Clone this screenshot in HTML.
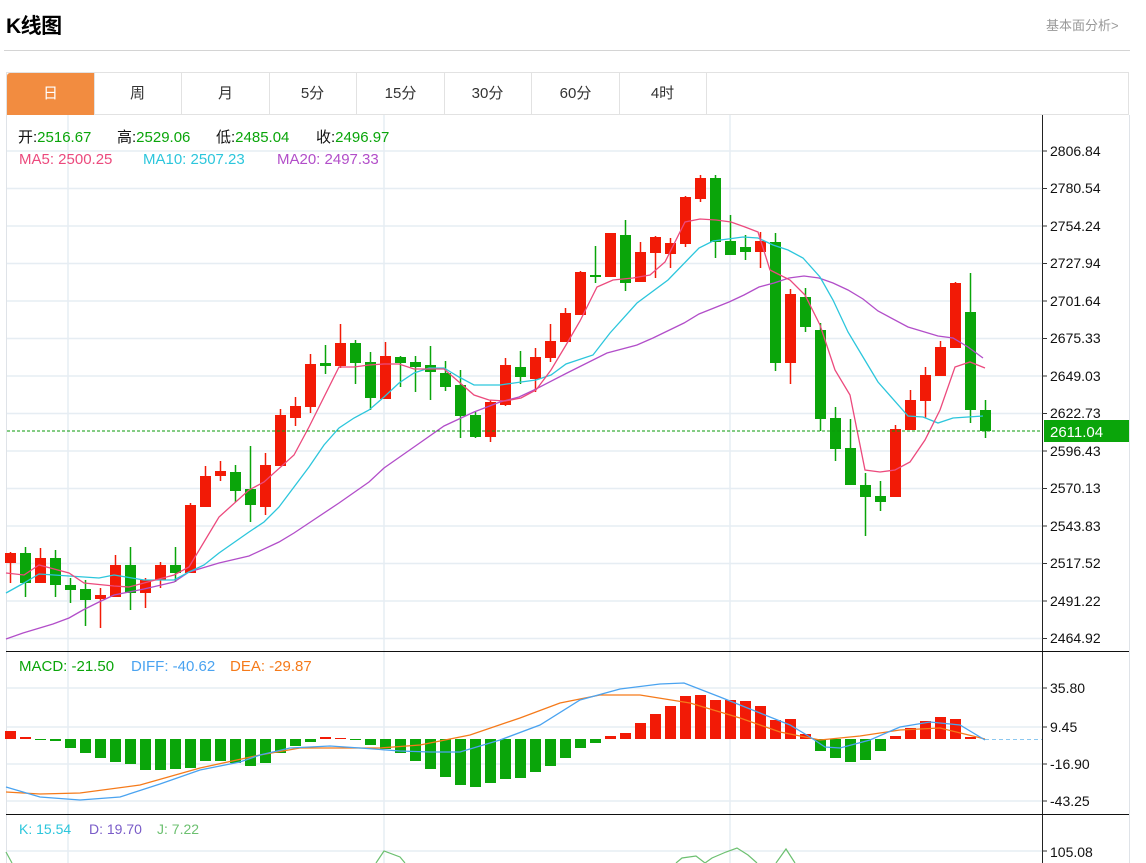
<!DOCTYPE html>
<html><head><meta charset="utf-8">
<style>
html,body{margin:0;padding:0;background:#fff;}
body{width:1146px;height:863px;overflow:hidden;position:relative;font-family:"Liberation Sans","Noto Sans CJK SC",sans-serif;}
.title{position:absolute;left:6px;top:10px;font-size:21px;font-weight:bold;color:#000;letter-spacing:-0.5px;}
.more{position:absolute;left:1046px;top:15px;font-size:13px;color:#999;}
.hr{position:absolute;left:4px;top:50px;width:1126px;height:1px;background:#d4d4d4;}
.tabs{position:absolute;left:6px;top:72px;width:1123px;height:43px;border:1px solid #e2e2e2;border-bottom:1px solid #e2e2e2;box-sizing:border-box;}
.tab{position:absolute;top:0;height:42px;width:87px;border-right:1px solid #e2e2e2;text-align:center;line-height:42px;font-size:15px;color:#333;}
.tab.on{background:#f28c40;color:#fff;border-radius:3px 0 0 0;}
svg{position:absolute;left:0;top:0;}
</style></head><body>
<div class="title">K线图</div>
<div class="more">基本面分析&gt;</div>
<div class="hr"></div>
<div class="tabs">
<div class="tab on" style="left:0">日</div>
<div class="tab" style="left:87px">周</div>
<div class="tab" style="left:175px">月</div>
<div class="tab" style="left:262px">5分</div>
<div class="tab" style="left:350px">15分</div>
<div class="tab" style="left:437px">30分</div>
<div class="tab" style="left:525px">60分</div>
<div class="tab" style="left:612px">4时</div>
</div>
<svg id="c" width="1146" height="863" xmlns="http://www.w3.org/2000/svg" font-family="Liberation Sans, Noto Sans CJK SC, sans-serif">
<line x1="6.5" y1="115" x2="6.5" y2="863" stroke="#dfe3e8"/>
<line x1="1129.5" y1="115" x2="1129.5" y2="863" stroke="#dfe3e8"/>
<g stroke="#e6edf3" stroke-width="1.5">
<line x1="7" y1="151" x2="1042" y2="151"/><line x1="7" y1="188.5" x2="1042" y2="188.5"/>
<line x1="7" y1="226" x2="1042" y2="226"/><line x1="7" y1="263.5" x2="1042" y2="263.5"/>
<line x1="7" y1="301" x2="1042" y2="301"/><line x1="7" y1="338.5" x2="1042" y2="338.5"/>
<line x1="7" y1="376" x2="1042" y2="376"/><line x1="7" y1="413.5" x2="1042" y2="413.5"/>
<line x1="7" y1="451" x2="1042" y2="451"/><line x1="7" y1="488.5" x2="1042" y2="488.5"/>
<line x1="7" y1="526" x2="1042" y2="526"/><line x1="7" y1="563.5" x2="1042" y2="563.5"/>
<line x1="7" y1="601" x2="1042" y2="601"/><line x1="7" y1="638.5" x2="1042" y2="638.5"/>
<line x1="7" y1="688" x2="1042" y2="688"/><line x1="7" y1="727" x2="1042" y2="727"/>
<line x1="7" y1="764" x2="1042" y2="764"/><line x1="7" y1="801" x2="1042" y2="801"/>
<line x1="7" y1="851" x2="1042" y2="851"/>
<line x1="68" y1="115" x2="68" y2="863"/><line x1="384" y1="115" x2="384" y2="863"/><line x1="730" y1="115" x2="730" y2="863"/>
</g>
<line x1="1042.5" y1="115" x2="1042.5" y2="863" stroke="#222"/>
<line x1="6" y1="651.5" x2="1129" y2="651.5" stroke="#111"/>
<line x1="6" y1="814.5" x2="1129" y2="814.5" stroke="#111"/>
<g stroke="#333">
<line x1="1042" y1="151" x2="1047" y2="151"/><line x1="1042" y1="188.5" x2="1047" y2="188.5"/>
<line x1="1042" y1="226" x2="1047" y2="226"/><line x1="1042" y1="263.5" x2="1047" y2="263.5"/>
<line x1="1042" y1="301" x2="1047" y2="301"/><line x1="1042" y1="338.5" x2="1047" y2="338.5"/>
<line x1="1042" y1="376" x2="1047" y2="376"/><line x1="1042" y1="413.5" x2="1047" y2="413.5"/>
<line x1="1042" y1="451" x2="1047" y2="451"/><line x1="1042" y1="488.5" x2="1047" y2="488.5"/>
<line x1="1042" y1="526" x2="1047" y2="526"/><line x1="1042" y1="563.5" x2="1047" y2="563.5"/>
<line x1="1042" y1="601" x2="1047" y2="601"/><line x1="1042" y1="638.5" x2="1047" y2="638.5"/>
<line x1="1042" y1="688" x2="1047" y2="688"/><line x1="1042" y1="727" x2="1047" y2="727"/>
<line x1="1042" y1="764" x2="1047" y2="764"/><line x1="1042" y1="801" x2="1047" y2="801"/>
<line x1="1042" y1="851" x2="1047" y2="851"/>
</g>
<g font-size="14" fill="#111">
<text x="1050" y="156">2806.84</text><text x="1050" y="193">2780.54</text>
<text x="1050" y="231">2754.24</text><text x="1050" y="268">2727.94</text>
<text x="1050" y="306">2701.64</text><text x="1050" y="343">2675.33</text>
<text x="1050" y="381">2649.03</text><text x="1050" y="418">2622.73</text>
<text x="1050" y="456">2596.43</text><text x="1050" y="493">2570.13</text>
<text x="1050" y="531">2543.83</text><text x="1050" y="568">2517.52</text>
<text x="1050" y="606">2491.22</text><text x="1050" y="643">2464.92</text>
<text x="1050" y="693">35.80</text><text x="1050" y="732">9.45</text>
<text x="1050" y="769">-16.90</text><text x="1050" y="806">-43.25</text>
<text x="1050" y="857">105.08</text>
</g>
<rect x="1044" y="420" width="85" height="22" fill="#0aa50a"/>
<text x="1050" y="437" font-size="15" fill="#fff">2611.04</text>
<g id="cd"></g>
<polyline fill="none" stroke="#b24ec9" stroke-width="1.3" points="6,639 23,633 53,624 69,618 83,610 99,602 114,595 129,592 144,589 174,582 189,572 219,563 249,556 279,542 294,533 309,523 339,503 369,482 384,468 414,447 444,426 474,412 500,402 519,397 534,390 567,373 607,353 637,345 653,338 684,323 699,314 729,302 744,295 759,287 774,283 789,278 804,276 819,278 833,283 848,290 863,299 878,311 908,327 938,336 953,338 968,347 983,358"/>
<polyline fill="none" stroke="#2cc6dc" stroke-width="1.3" points="6,593 24,583 39,574 69,576 99,578 114,575 144,580 174,580 189,572 204,565 219,553 249,532 264,522 279,507 294,487 309,467 324,445 339,428 354,418 369,410 384,397 399,383 414,373 429,368 444,368 459,377 474,385 500,385 521,382 536,380 551,375 566,364 593,355 610,333 637,303 668,280 699,248 713,241 743,237 758,238 773,245 788,250 803,258 820,277 833,300 848,332 863,357 878,382 908,416 923,417 938,423 953,418 983,416"/>
<polyline fill="none" stroke="#ec4a7d" stroke-width="1.3" points="6,573 24,575 39,565 69,573 84,583 114,586 129,587 144,583 174,575 189,567 219,517 249,490 264,482 294,455 309,427 339,367 354,367 369,365 384,364 399,364 414,369 444,369 459,382 474,395 489,400 505,401 521,398 536,390 551,370 566,345 580,321 597,287 613,280 633,278 650,275 665,262 685,222 700,219 716,220 731,222 745,227 758,232 770,270 790,280 805,295 820,325 835,370 850,395 865,470 880,472 895,470 910,462 925,440 940,410 955,367 970,362 985,368"/>
<line x1="7" y1="431" x2="1042" y2="431" stroke="#0a9a0a" stroke-dasharray="3,2"/>
<g id="md"></g>
<line x1="985" y1="739.5" x2="1042" y2="739.5" stroke="#8cc8f0" stroke-dasharray="4,3"/>
<polyline fill="none" stroke="#f57a1a" stroke-width="1.3" points="6,792 40,794 80,793 140,785 200,768 260,755 300,748 380,748 420,745 470,735 520,718 560,703 600,695 640,695 690,703 740,718 780,732 820,740 860,736 900,730 940,728 985,739"/>
<polyline fill="none" stroke="#4aa3f0" stroke-width="1.3" points="6,787 40,797 80,800 120,797 160,784 200,770 240,762 260,755 290,748 330,746 360,748 400,751 430,752 460,752 500,740 540,725 580,700 620,689 660,684 684,683 720,697 760,713 790,725 810,737 825,747 840,748 870,740 900,727 930,722 960,725 985,740"/>
<polyline fill="none" stroke="#6cc070" stroke-width="1.2" points="6,852 12,863"/>
<polyline fill="none" stroke="#6cc070" stroke-width="1.2" points="376,863 384,851 400,857 405,863"/>
<polyline fill="none" stroke="#6cc070" stroke-width="1.2" points="676,863 682,858 696,856 705,863 712,858 726,852 737,848 748,855 757,863"/>
<polyline fill="none" stroke="#6cc070" stroke-width="1.2" points="776,863 786,849 795,863"/>
<g font-size="15" fill="#111">
<text x="18" y="142">开:<tspan fill="#0aa50a">2516.67</tspan></text>
<text x="117" y="142">高:<tspan fill="#0aa50a">2529.06</tspan></text>
<text x="216" y="142">低:<tspan fill="#0aa50a">2485.04</tspan></text>
<text x="316" y="142">收:<tspan fill="#0aa50a">2496.97</tspan></text>
</g>
<text x="19" y="164" font-size="15" fill="#ec4a7d">MA5: 2500.25</text>
<text x="143" y="164" font-size="15" fill="#2cc6dc">MA10: 2507.23</text>
<text x="277" y="164" font-size="15" fill="#b24ec9">MA20: 2497.33</text>
<text x="19" y="671" font-size="15" fill="#0aa50a">MACD: -21.50</text>
<text x="131" y="671" font-size="15" fill="#4aa3f0">DIFF: -40.62</text>
<text x="230" y="671" font-size="15" fill="#f57a1a">DEA: -29.87</text>
<text x="19" y="834" font-size="14" fill="#2cc6dc">K: 15.54</text>
<text x="89" y="834" font-size="14" fill="#7a5cc8">D: 19.70</text>
<text x="157" y="834" font-size="14" fill="#6cc070">J: 7.22</text>
</svg>
<script>
var D=[["r",553,563,552,583],["g",553,583,547,597],["r",558,583,548,583],["g",558,585,550,597],["g",585,590,578,603],["g",589,600,580,626],["r",595,599,588,628],["r",565,597,555,597],["g",565,593,547,610],["r",580,593,578,608],["r",565,580,562,588],["g",565,573,547,582],["r",505,573,503,573],["r",476,507,466,507],["r",471,476,461,481],["g",472,491,465,502],["g",489,505,446,522],["r",465,507,453,515],["r",415,466,409,466],["r",406,418,397,426],["r",364,407,354,413],["g",363,366,345,374],["r",343,366,324,368],["g",343,363,340,384],["g",362,398,352,410],["r",356,399,342,399],["g",357,363,356,387],["g",362,367,356,392],["g",365,372,346,400],["g",373,387,361,391],["g",385,416,370,438],["g",415,437,412,438],["r",402,437,400,442],["r",365,405,358,406],["g",367,377,351,384],["r",357,379,348,392],["r",341,358,324,362],["r",313,342,308,342],["r",272,315,271,315],["g",275,277,246,283],["r",233,277,233,277],["g",235,283,220,291],["r",252,282,242,282],["r",237,253,236,278],["r",243,254,238,268],["r",197,244,196,247],["r",178,199,175,202],["g",178,242,175,258],["g",241,255,215,255],["g",247,252,235,260],["r",241,252,232,268],["g",242,363,233,371],["r",294,363,289,384],["g",297,327,288,332],["g",330,419,323,431],["g",418,449,407,461],["g",448,485,419,485],["g",485,497,473,536],["g",496,502,481,511],["r",429,497,425,497],["r",400,430,390,430],["r",375,401,367,418],["r",347,376,341,376],["r",283,348,282,348],["g",312,410,273,423],["g",410,431,400,438]];
var M=[731,737,740,741,748,753,758,762,764,770,770,769,768,761,761,763,766,763,753,746,742,737,738,740,745,749,753,761,769,777,785,787,783,779,778,772,766,758,748,743,736,733,723,714,706,696,695,700,700,701,706,720,719,734,751,758,762,760,751,736,728,721,717,719,737,739];
var ns="http://www.w3.org/2000/svg",cd=document.getElementById("cd"),md=document.getElementById("md");
function el(p,t,a){var e=document.createElementNS(ns,t);for(var k in a)e.setAttribute(k,a[k]);p.appendChild(e);}
D.forEach(function(d,i){var x=10+15*i,c=d[0]=="r"?"#f21a06":"#0aa50a";
el(cd,"line",{x1:x+0.5,x2:x+0.5,y1:d[3],y2:d[4],stroke:c,"stroke-width":1.5});
var h=Math.max(d[2]-d[1],2);el(cd,"rect",{x:x-5,y:d[1],width:11,height:h,fill:c});
var m=M[i],z=739;if(Math.abs(m-z)>=1){var c2=m<z?"#f21a06":"#0aa50a";el(md,"rect",{x:x-5,y:Math.min(m,z),width:11,height:Math.abs(m-z),fill:c2});}});
</script>
</body></html>
